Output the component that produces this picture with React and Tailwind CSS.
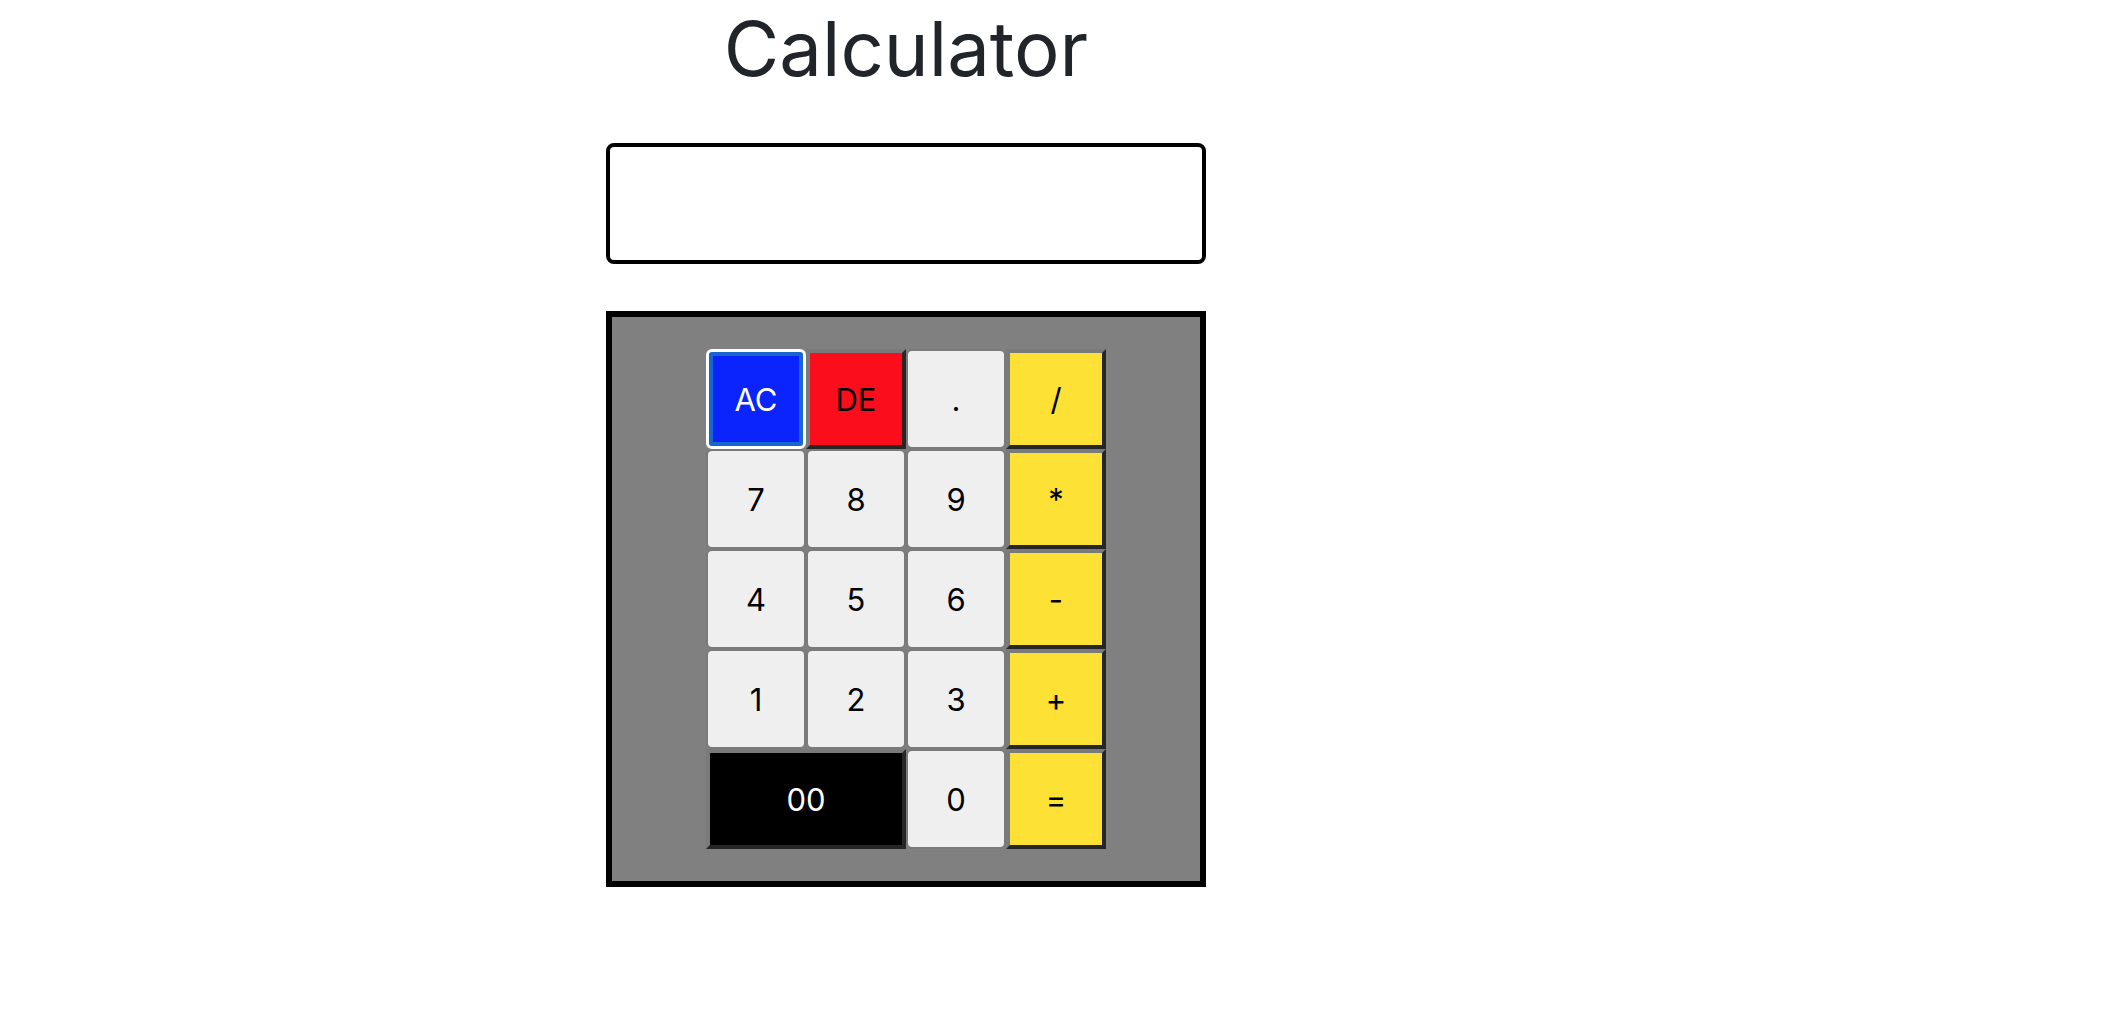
import { useState } from 'react';

const keys = [
  { label: 'AC', kind: 'clear' },
  { label: 'DE', kind: 'del' },
  { label: '.', kind: 'num' },
  { label: '/', kind: 'op' },
  { label: '7', kind: 'num' },
  { label: '8', kind: 'num' },
  { label: '9', kind: 'num' },
  { label: '*', kind: 'op' },
  { label: '4', kind: 'num' },
  { label: '5', kind: 'num' },
  { label: '6', kind: 'num' },
  { label: '-', kind: 'op' },
  { label: '1', kind: 'num' },
  { label: '2', kind: 'num' },
  { label: '3', kind: 'num' },
  { label: '+', kind: 'op' },
  { label: '00', kind: 'zero' },
  { label: '0', kind: 'num' },
  { label: '=', kind: 'op' },
];

const outset =
  'border-4 border-t-[#7a7a7a] border-l-[#7a7a7a] border-b-[#262626] border-r-[#262626]';

const styles = {
  clear:
    'bg-[#0b24fb] text-white rounded-[6px] border-[3px] border-white shadow-[inset_0_0_0_4px_#1a66cf]',
  del: `bg-[#fc0d1b] text-black ${outset}`,
  num: 'bg-[#efefef] text-black rounded-[6px] border-2 border-[#7a7a7a]',
  op: `bg-[#fde134] text-black ${outset}`,
  zero: `bg-black text-white col-span-2 ${outset}`,
};

export default function App() {
  const [value, setValue] = useState('');

  function press(key) {
    if (key.kind === 'clear') return setValue('');
    if (key.kind === 'del') return setValue((v) => v.slice(0, -1));
    if (key.label === '=') {
      try {
        // eslint-disable-next-line no-new-func
        setValue(String(Function(`return (${value})`)()));
      } catch {
        setValue('Error');
      }
      return;
    }
    setValue((v) => v + key.label);
  }

  return (
    <div className="min-h-screen bg-white font-['Inter','Liberation_Sans',sans-serif]">
      <div className="ml-[606px] flex w-[600px] flex-col">
        <h1 className="mt-[2px] h-[92px] text-center text-[76px] leading-[92px] font-normal text-[#212529]">
          Calculator
        </h1>

        <input
          className="mt-[49px] h-[121px] w-full rounded-[8px] border-4 border-black px-4 text-[32px] outline-none"
          value={value}
          readOnly
        />

        {/* keypad */}
        <div className="mt-[47px] border-[6px] border-black bg-[#808080] px-[94px] pt-[32px] pb-[32px]">
          <div className="grid grid-cols-4">
            {keys.map((key) => (
              <button
                key={key.label}
                onClick={() => press(key)}
                className={`flex h-[100px] items-center justify-center pt-[3px] text-[31px] ${styles[key.kind]}`}
              >
                {key.label}
              </button>
            ))}
          </div>
        </div>
      </div>
    </div>
  );
}
